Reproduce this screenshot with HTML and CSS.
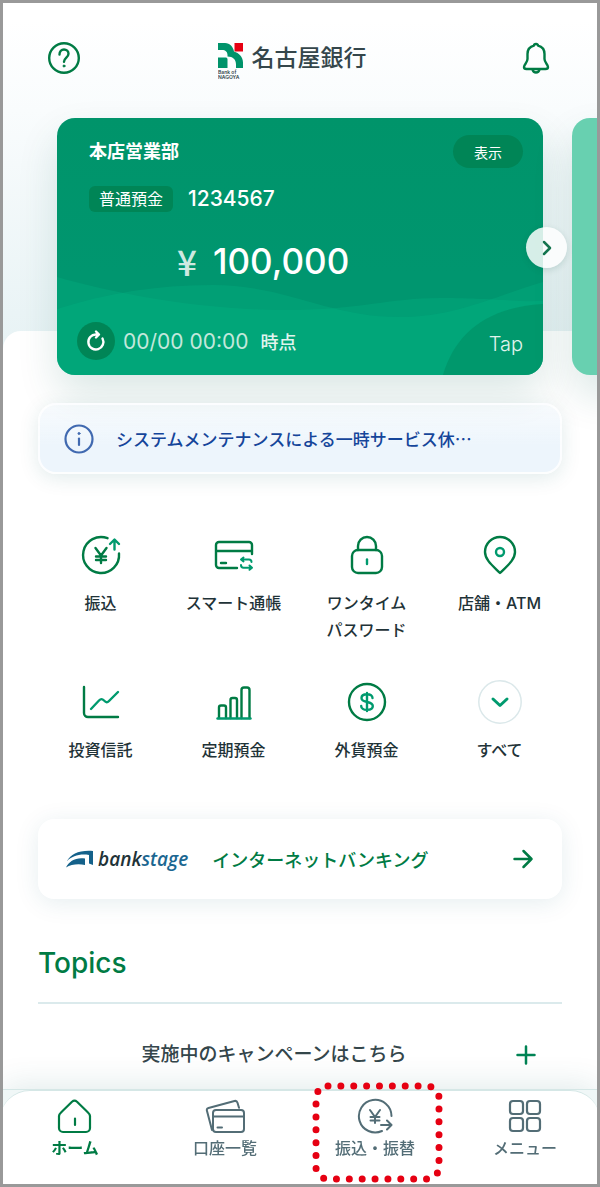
FILE: index.html
```html
<!DOCTYPE html>
<html lang="ja">
<head>
    <meta charset="UTF-8">
    <meta name="viewport" content="width=device-width, initial-scale=1.0">
    <title>名古屋銀行</title>
    <link rel="stylesheet" href="styles.css">
</head>
<body>
    <header class="header">
        <button class="icon-btn" aria-label="ヘルプ">
            <svg width="34" height="34" viewBox="0 0 34 34" fill="none" stroke="#007b44" stroke-width="2.400" stroke-linecap="round">
                <circle cx="17" cy="17" r="14.800"/>
                <path d="M12.500 13.500c0-3 2-5 4.500-5s4.500 1.800 4.500 4.300c0 3.700-4.500 4-4.500 8"/>
                <circle cx="17" cy="25" r="1" fill="#007b44" stroke-width="1"/>
            </svg>
        </button>
        <a href="#" class="logo">
            <svg class="logo-mark" width="27" height="38" viewBox="0 0 27 38">
                <path fill="#00936a" d="M0 0h7c5 0 8 4 9 8.500 5 1.500 9 5.500 9 11V25h-7v-3.500c0-5-3-8-8.500-8V12C9.500 9 7.500 7 4 7H0z"/>
                <path fill="#00936a" d="M0 14.500h8c1 0 1.500 1 1.500 2V25H0z"/>
                <path fill="#e60012" d="M16.500 0H25v8.500h-8.500z"/>
                <text x="0" y="31" class="logo-small">Bank of</text>
                <text x="0" y="36" class="logo-small">NAGOYA</text>
            </svg>
            <span>名古屋銀行</span>
        </a>
        <button class="icon-btn" aria-label="お知らせ">
            <svg width="34" height="34" viewBox="0 0 34 34" fill="none" stroke="#007b44" stroke-width="2.400" stroke-linecap="round" stroke-linejoin="round">
                <path d="M17 3c-1.500 0-2 1-2 1.600-4 .9-6.500 4-6.500 8.400v5c0 3.500-3.500 5.500-3.500 8 0 1.500 1 2 2.500 2h19c1.500 0 2.500-.5 2.500-2 0-2.500-3.500-4.500-3.500-8v-5c0-4.400-2.500-7.500-6.500-8.400C19 4 18.500 3 17 3z"/>
                <path d="M13.500 28.500c.5 2 1.700 3 3.500 3s3-1 3.500-3"/>
            </svg>
        </button>
    </header>

    <section class="carousel">
        <div class="card">
            <svg class="card-bg" viewBox="0 0 486 257" preserveAspectRatio="none">
                <path fill="#04b586" fill-opacity="0.300" d="M0 159C60 176 140 191 220 192S330 180 383 180s70 4 103 3v74H0z"/>
                <path fill="#04b586" fill-opacity="0.300" d="M0 191C50 175 100 167 155 167C230 167 270 199 343 199C400 199 440 177 486 164v93H0z"/>
                <path fill="#008a60" fill-opacity="0.500" d="M386 257c12-42 45-68 100-71v71z"/>
            </svg>
            <div class="card-row">
                <h2 class="branch">本店営業部</h2>
                <button class="show-btn">表示</button>
            </div>
            <div class="account">
                <span class="account-type">普通預金</span>
                <span class="account-no">1234567</span>
            </div>
            <p class="balance"><span class="yen">¥</span><span>100,000</span></p>
            <div class="card-foot">
                <button class="reload-btn" aria-label="更新">
                    <svg width="24" height="24" viewBox="0 0 24 24" fill="none" stroke="#fff" stroke-width="2.400" stroke-linecap="round" stroke-linejoin="round">
                        <path d="M18.500 9.500A7.500 7.500 0 1 1 12 5.500h2.500M12 2.500l3 3-3 3"/>
                    </svg>
                </button>
                <span class="time">00/00 00:00</span>
                <span class="asof">時点</span>
                <a href="#" class="tap">Tap</a>
            </div>
        </div>
        <div class="card card-next"></div>
        <button class="next-btn" aria-label="次へ">
            <svg width="20" height="20" viewBox="0 0 20 20" fill="none" stroke="#14754f" stroke-width="2.500" stroke-linecap="round" stroke-linejoin="round">
                <path d="M7 4l6 6-6 6"/>
            </svg>
        </button>
    </section>

    <main class="sheet">
        <a href="#" class="notice">
            <svg width="30" height="30" viewBox="0 0 30 30" fill="none" stroke="#4069b0" stroke-width="2.200" stroke-linecap="round">
                <circle cx="15" cy="15" r="13.500"/>
                <path d="M15 14.500v6.500"/>
                <circle cx="15" cy="9.500" r="1" fill="#4069b0" stroke-width="1"/>
            </svg>
            <span>システムメンテナンスによる一時サービス休…</span>
        </a>

        <nav class="services">
            <a href="#" class="service">
                <svg width="44" height="44" viewBox="0 0 44 44" fill="none" stroke="#007b44" stroke-width="2.400" stroke-linecap="round" stroke-linejoin="round">
                    <path d="M28.500 5.200A18 18 0 1 0 40 20.500"/>
                    <path d="M16.500 15l5.500 7.500 5.500-7.500M22 23v7M17 23.500h10M17 27h10"/>
                    <path stroke="#009a6e" d="M35.500 16.500V7M31 11l4.500-4.500L40 11"/>
                </svg>
                <span>振込</span>
            </a>
            <a href="#" class="service">
                <svg width="44" height="44" viewBox="0 0 44 44" fill="none" stroke="#007b44" stroke-width="2.400" stroke-linecap="round" stroke-linejoin="round">
                    <path d="M25 35H7a3 3 0 0 1-3-3V12a3 3 0 0 1 3-3h30a3 3 0 0 1 3 3v9M4 18h36M9 30h5"/>
                    <path stroke="#009a6e" stroke-width="2" d="M39.500 29c0-2-1-2.500-2.500-2.500h-7.500M31.500 24.500l-2.500 2 2.500 2M29 32c0 2 1 2.800 2.500 2.800h8M37.500 32.500l2.500 2.300-2.500 2"/>
                </svg>
                <span>スマート通帳</span>
            </a>
            <a href="#" class="service">
                <svg width="44" height="44" viewBox="0 0 44 44" fill="none" stroke="#007b44" stroke-width="2.400" stroke-linecap="round">
                    <rect x="7" y="17" width="30" height="23" rx="6"/>
                    <path d="M13 17v-4a9 9 0 0 1 18 0v4"/>
                    <path stroke="#009a6e" d="M22 26.500v4.500"/>
                </svg>
                <span>ワンタイム<br>パスワード</span>
            </a>
            <a href="#" class="service">
                <svg width="44" height="44" viewBox="0 0 44 44" fill="none" stroke="#007b44" stroke-width="2.400" stroke-linejoin="round">
                    <path d="M22 40C15 33 7 27 7 19a15 15 0 0 1 30 0c0 8-8 14-15 21z"/>
                    <circle cx="22" cy="19" r="4" stroke="#009a6e"/>
                </svg>
                <span>店舗・ATM</span>
            </a>
            <a href="#" class="service">
                <svg width="44" height="44" viewBox="0 0 44 44" fill="none" stroke="#007b44" stroke-width="2.400" stroke-linecap="round">
                    <path d="M5 7v26a4 4 0 0 0 4 4h30"/>
                    <path stroke="#009a6e" d="M12 29l8-8.500c2-2 3-2 5 0s3.500 2.500 5.500 0L39 12"/>
                </svg>
                <span>投資信託</span>
            </a>
            <a href="#" class="service">
                <svg width="44" height="44" viewBox="0 0 44 44" fill="none" stroke="#007b44" stroke-width="2.400" stroke-linecap="round">
                    <path d="M7 38V27.500a2 2 0 0 1 2-2h3a2 2 0 0 1 2 2V38M18.500 38V20a2 2 0 0 1 2-2h2.500a2 2 0 0 1 2 2v18M29.500 38V10a2.500 2.500 0 0 1 2.500-2.500h3a2.500 2.500 0 0 1 2.500 2.500v28"/>
                    <path stroke="#009a6e" d="M5.500 38.500h33"/>
                </svg>
                <span>定期預金</span>
            </a>
            <a href="#" class="service">
                <svg width="44" height="44" viewBox="0 0 44 44" fill="none" stroke="#007b44" stroke-width="2.400" stroke-linecap="round">
                    <circle cx="22" cy="22" r="18"/>
                    <path stroke="#009a6e" d="M27.500 18c0-2.500-2-3.800-5.500-3.800s-5.500 1.300-5.500 3.800 2 3.300 5.500 4 5.800 1.500 5.800 4-2.300 3.900-5.800 3.900-5.800-1.400-5.800-4M22 13v18"/>
                </svg>
                <span>外貨預金</span>
            </a>
            <a href="#" class="service">
                <svg width="44" height="44" viewBox="0 0 44 44" fill="none" stroke-linecap="round" stroke-linejoin="round">
                    <circle cx="22" cy="22" r="21.200" stroke="#dbe8ea" stroke-width="1.500"/>
                    <path stroke="#009a6e" stroke-width="3" d="M15 19l7 6.500 7-6.500"/>
                </svg>
                <span>すべて</span>
            </a>
        </nav>

        <a href="#" class="bankstage">
            <svg width="28" height="18" viewBox="0 0 28 18">
                <path fill="#14618a" d="M1 11C5 4 13 0 27 1v14l-4-1.500V5C14 3.500 6 6 1 11z"/>
                <path fill="#14618a" d="M0 17.500C3 11 10 7 19 8.500V15C12 13.500 5 14.500 0 17.500z"/>
            </svg>
            <span class="bankstage-name">bank<b>stage</b></span>
            <span class="bankstage-text">インターネットバンキング</span>
            <svg width="22" height="22" viewBox="0 0 22 22" fill="none" stroke="#007b44" stroke-width="2.500" stroke-linecap="round" stroke-linejoin="round">
                <path d="M2.500 11h17M11.500 3l8 8-8 8"/>
            </svg>
        </a>

        <section class="topics">
            <h2>Topics</h2>
            <button class="campaign">
                <span>実施中のキャンペーンはこちら</span>
                <svg width="32" height="20" viewBox="0 0 32 20" stroke="#008354" stroke-width="2.500" stroke-linecap="round">
                    <path d="M16 1.500v17M7.500 10h17"/>
                </svg>
            </button>
        </section>
    </main>

    <footer class="tabbar">
        <nav class="tabs">
            <a href="#" class="tab active">
                <svg width="40" height="36" viewBox="0 0 40 36" fill="none" stroke="currentColor" stroke-width="2.200" stroke-linecap="round" stroke-linejoin="round">
                    <path d="M7.500 13l9.500-9.200c1.800-1.600 3.200-1.600 5 0l9.500 9.200c2 2 3.500 3 3.500 5v12a4 4 0 0 1-4 4H8a4 4 0 0 1-4-4V18c0-2 1.500-3 3.500-5zM20 20.500v6.500"/>
                </svg>
                <span>ホーム</span>
            </a>
            <a href="#" class="tab">
                <svg width="40" height="36" viewBox="0 0 40 36" fill="none" stroke="currentColor" stroke-width="2" stroke-linecap="round" stroke-linejoin="round">
                    <rect x="8" y="12" width="31" height="22" rx="3"/>
                    <path d="M8 18.500h31M12.500 29.500h4.500"/>
                    <path d="M7 32L2 13c-.5-1.500 0-2.500 1.500-3l26-7c1.500-.4 2.500.3 3 1.800l1.500 5"/>
                </svg>
                <span>口座一覧</span>
            </a>
            <a href="#" class="tab">
                <svg width="40" height="36" viewBox="0 0 40 36" fill="none" stroke="currentColor" stroke-width="2" stroke-linecap="round" stroke-linejoin="round">
                    <path d="M36.500 18A16.300 16.300 0 1 0 27 33M15 12l5 7 5-7M20 19v6M15.500 19h9M15.500 22.500h9M26 27h10M32 22.500l4.500 4.500-4.500 4.500"/>
                </svg>
                <span>振込・振替</span>
                <svg class="highlight" width="132" height="102" viewBox="0 0 132 102" fill="none">
                    <rect x="4" y="4" width="123" height="93" rx="12" stroke="#e60012" stroke-width="7" stroke-linecap="round" stroke-dasharray="0 12.870"/>
                </svg>
            </a>
            <a href="#" class="tab">
                <svg width="40" height="36" viewBox="0 0 40 36" fill="none" stroke="currentColor" stroke-width="2.200">
                    <rect x="5" y="3" width="13" height="13" rx="3"/>
                    <rect x="22" y="3" width="13" height="13" rx="3"/>
                    <rect x="5" y="20" width="13" height="13" rx="3"/>
                    <rect x="22" y="20" width="13" height="13" rx="3"/>
                </svg>
                <span>メニュー</span>
            </a>
        </nav>
    </footer>
</body>
</html>
```
FILE: styles.css
```css
* {
    margin: 0;
    padding: 0;
    box-sizing: border-box;
}

body {
    font-family: Inter, 'Noto Sans CJK JP', sans-serif;
    color: #1f3338;
    min-height: 100vh;
    display: flex;
    flex-direction: column;
    border: 3px solid #999;
    background: linear-gradient(#fff 20px, #f9fcfd 110px, #e8f3f5 340px);
}

a {
    color: inherit;
    text-decoration: none;
}

button {
    font: inherit;
    color: inherit;
    background: none;
    border: none;
    cursor: pointer;
}

svg {
    display: block;
    flex-shrink: 0;
}

/* header */
.header {
    display: flex;
    align-items: center;
    justify-content: space-between;
    height: 110px;
    padding: 0 44px;
    margin-bottom: 5px;
}

.logo {
    display: flex;
    align-items: center;
    gap: 7px;
    margin-right: 16px;
    font-size: 23px;
    line-height: 32px;
    font-weight: 500;
    color: #34464b;
}

.logo-mark {
    margin-top: 8px;
}

.logo-small {
    font-family: Inter, sans-serif;
    font-size: 5px;
    font-weight: 600;
    fill: #34464b;
}

/* account cards */
.carousel {
    position: relative;
    z-index: 1;
    display: flex;
    gap: 29px;
    padding-left: 54px;
    overflow-x: clip;
}

.card {
    position: relative;
    flex: 0 0 calc(100% - 54px);
    min-height: 257px;
    padding: 17px 20px 14px 32px;
    border-radius: 18px;
    background: linear-gradient(#00946a, #00966f 60%);
    box-shadow: 0 20px 40px rgba(0, 90, 80, 0.14);
    color: #fff;
}

.card-bg {
    position: absolute;
    top: 0;
    left: 0;
    width: 100%;
    height: 100%;
    border-radius: 18px;
}

.card-row,
.account,
.balance,
.card-foot {
    position: relative;
}

.card-row {
    display: flex;
    align-items: center;
    justify-content: space-between;
}

.branch {
    font-size: 18px;
    line-height: 33px;
    font-weight: 700;
}

.show-btn {
    width: 70px;
    height: 33px;
    border-radius: 17px;
    background: #008556;
    font-size: 14px;
}

.account {
    display: flex;
    align-items: center;
    gap: 15px;
    margin-top: 18px;
}

.account-type {
    padding: 0 10px;
    border-radius: 6px;
    background: #008556;
    font-size: 16px;
    line-height: 26px;
}

.account-no {
    font-size: 21px;
    line-height: 26px;
    font-weight: 500;
}

.balance {
    display: flex;
    gap: 14px;
    margin: 28px 0 40px 86px;
    font-size: 35px;
    line-height: 42px;
    font-weight: 500;
}

.yen {
    width: 24px;
    font-family: 'Noto Sans CJK JP', sans-serif;
    text-align: center;
    color: #cfe9e1;
}

.card-foot {
    display: flex;
    align-items: center;
    margin-left: -12px;
}

.reload-btn {
    display: flex;
    align-items: center;
    justify-content: center;
    width: 38px;
    height: 38px;
    border-radius: 50%;
    background: #008556;
}

.time {
    margin-left: 8px;
    font-size: 21px;
    color: #c3e8dc;
}

.asof {
    margin-left: 12px;
    font-size: 18px;
    font-weight: 500;
    color: #e0f4ee;
}

.tap {
    margin-left: auto;
    padding-top: 6px;
    font-size: 20px;
    line-height: 24px;
    font-weight: 300;
    color: #e0f4ee;
}

.card-next {
    background: #68d0b0;
}

.next-btn {
    position: absolute;
    top: 109px;
    right: 30px;
    display: flex;
    align-items: center;
    justify-content: center;
    width: 41px;
    height: 41px;
    border-radius: 50%;
    background: rgba(255, 255, 255, 0.84);
    box-shadow: 0 2px 6px rgba(0, 80, 60, 0.15);
}

/* white sheet below the cards */
.sheet {
    flex: 1;
    margin-top: -44px;
    padding: 72px 35px 20px;
    border-radius: 18px 18px 0 0;
    background: #fff;
}

.notice {
    position: relative;
    z-index: 2;
    display: flex;
    align-items: center;
    gap: 22px;
    height: 71px;
    padding: 0 24px;
    border: 2px solid rgba(255, 255, 255, 0.8);
    border-radius: 18px;
    background: linear-gradient(rgba(233, 243, 251, 0.3), #edf5fc 60%);
    box-shadow: 0 4px 20px rgba(0, 90, 90, 0.12);
    font-size: 17px;
    font-weight: 500;
    color: #15459a;
}

.notice span {
    font-family: 'Noto Sans CJK JP', sans-serif;
    white-space: nowrap;
}

.services {
    display: grid;
    grid-template-columns: repeat(4, 1fr);
    row-gap: 36px;
    margin: 59px -4px 55px;
}

.service {
    display: flex;
    flex-direction: column;
    align-items: center;
    gap: 13px;
    font-size: 16px;
    line-height: 27px;
    font-weight: 500;
    text-align: center;
}

.bankstage {
    display: flex;
    align-items: center;
    height: 80px;
    padding: 0 28px;
    border-radius: 16px;
    background: #fff;
    box-shadow: 0 4px 24px rgba(0, 90, 110, 0.1);
}

.bankstage-name {
    margin-left: 4px;
    font-family: 'Open Sans', sans-serif;
    font-size: 19px;
    font-style: italic;
    font-weight: 600;
}

.bankstage-name b {
    font-weight: 600;
    color: #1b6791;
}

.bankstage-text {
    flex: 1;
    margin-left: 24px;
    font-size: 18px;
    font-weight: 500;
    color: #007b44;
}

.topics {
    margin-top: 44px;
}

.topics h2 {
    padding-bottom: 19px;
    border-bottom: 2px solid #dbeaec;
    font-size: 28px;
    line-height: 40px;
    font-weight: 500;
    color: #007b44;
}

.campaign {
    display: flex;
    align-items: center;
    width: 100%;
    padding: 37px 20px 0 0;
    font-size: 19px;
    line-height: 28px;
    font-weight: 500;
    color: #34464b;
}

.campaign span {
    flex: 1;
}

/* bottom tabs */
.tabbar {
    position: sticky;
    bottom: 0;
    z-index: 3;
    border-top: 1px solid #d5e7e6;
    background: #f0f7f7;
    box-shadow: 0 -4px 32px rgba(0, 90, 90, 0.12);
    clip-path: inset(-40px 0 0);
}

.tabs {
    display: grid;
    grid-template-columns: repeat(4, 1fr);
    height: 94px;
    padding: 7px 0;
    margin: 0 -3px;
    border-top: 1px solid #d5e7e6;
    border-radius: 30px 30px 0 0;
    background: #fff;
}

.tab {
    position: relative;
    display: flex;
    flex-direction: column;
    align-items: center;
    gap: 2px;
    font-size: 16px;
    line-height: 24px;
    font-weight: 500;
    color: #536d76;
}

.tab.active {
    color: #007b44;
    font-weight: 700;
}

.highlight {
    position: absolute;
    top: -16px;
    left: 12px;
}
```
